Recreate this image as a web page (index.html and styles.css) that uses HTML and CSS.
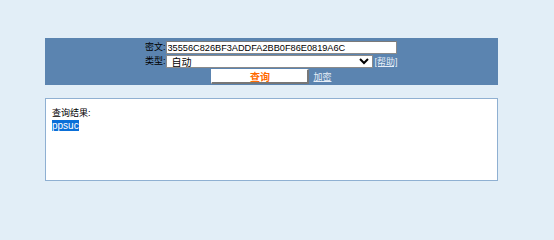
FILE: index.html
```html
<!DOCTYPE html>
<html lang="zh-CN">
<head>
    <meta charset="UTF-8">
    <title>密文查询</title>
    <link rel="stylesheet" href="styles.css">
</head>
<body>
    <div class="wrap">
        <form class="query-panel">
            <label class="label">密文:</label>
            <input class="text-input" type="text" value="35556C826BF3ADDFA2BB0F86E0819A6C">
            <label class="label">类型:</label>
            <span class="field">
                <select class="type-select">
                    <option>自动</option>
                </select>
                <a href="#" class="link">[帮助]</a>
            </span>
            <div class="actions">
                <button type="button" class="query-button">查询</button>
                <a href="#" class="link">加密</a>
            </div>
        </form>
        <div class="result">
            <p class="result-title">查询结果:</p>
            <p class="result-text"><span class="hl">ppsuc</span></p>
        </div>
    </div>
</body>
</html>
```

FILE: styles.css
```css
body {
    margin: 0;
    background-color: #e2eef7;
    font-family: "Liberation Sans", "Noto Sans CJK SC", sans-serif;
    font-size: 10px;
    color: #000;
}

.wrap {
    width: 453px;
    margin-left: 45px;
    padding-top: 38px;
}

.query-panel {
    background-color: #5b84b0;
    height: 47px;
    padding-top: 3px;
    box-sizing: border-box;
    display: grid;
    grid-template-columns: 22px 234px;
    grid-auto-rows: 13px;
    row-gap: 1px;
    justify-content: center;
    align-items: center;
}

.label {
    white-space: nowrap;
    text-align: right;
    font-size: 9px;
    line-height: 13px;
}

.text-input {
    width: 231px;
    height: 13px;
    box-sizing: border-box;
    border: 1px solid #8a8a8a;
    border-top-color: #7a7a7a;
    padding: 0 2px 0 1px;
    font-family: "Liberation Sans", sans-serif;
    font-size: 9.2px;
    background: #fff;
    outline: none;
}

.field {
    display: flex;
    align-items: center;
    white-space: nowrap;
}

.type-select {
    width: 207px;
    height: 13px;
    box-sizing: border-box;
    border: 1px solid #8a8a8a;
    font-size: 10px;
    font-family: "Liberation Sans", "Noto Sans CJK SC", sans-serif;
    padding: 0 0 0 1px;
    background: #fff;
    margin-right: 2px;
}

.link {
    color: #e6eef7;
    text-decoration: underline;
    font-size: 9px;
    white-space: nowrap;
}

.actions {
    grid-column: 1 / 3;
    display: flex;
    align-items: center;
    justify-content: center;
    height: 15px;
    margin-top: 2px;
}

.query-button {
    width: 98px;
    height: 15px;
    background: #fff;
    border: 1px solid #fff;
    border-right: 2px solid #777;
    border-bottom: 2px solid #777;
    color: #ff6a00;
    font-weight: bold;
    font-size: 10px;
    font-family: "Noto Sans CJK SC", sans-serif;
    padding: 0;
    line-height: 11px;
    margin-right: 4px;
}

.result {
    margin-top: 13px;
    height: 83px;
    box-sizing: border-box;
    background: #fff;
    border: 1px solid #8fb0d2;
    padding: 8px 6px;
}

.result-title {
    margin: 0;
    line-height: 13px;
    font-size: 9px;
}

.result-text {
    margin: 0;
    line-height: 11px;
    font-family: "Liberation Sans", sans-serif;
}

.hl {
    background: #0a6fd8;
    color: #fff;
}
```
